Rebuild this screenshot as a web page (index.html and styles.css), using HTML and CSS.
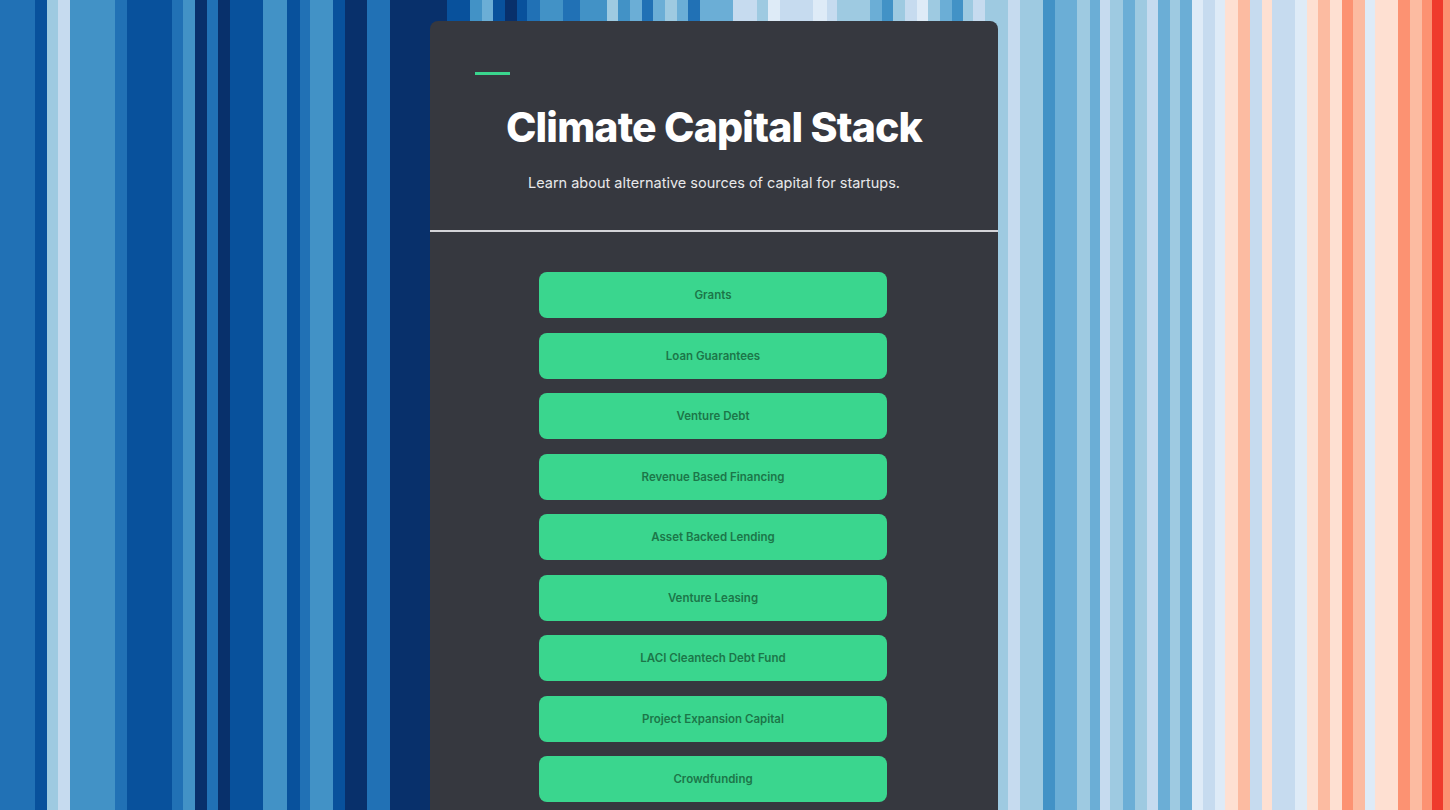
FILE: index.html
```html
<!DOCTYPE html>
<html lang="en">
<head>
    <meta charset="UTF-8">
    <meta name="viewport" content="width=device-width, initial-scale=1.0">
    <title>Climate Capital Stack</title>
    <link rel="stylesheet" href="styles.css">
</head>
<body>
    <main class="stack-card">
        <header class="stack-header">
            <span class="accent-bar"></span>
            <h1>Climate Capital Stack</h1>
            <p>Learn about alternative sources of capital for startups.</p>
        </header>
        <nav class="stack-list">
            <button class="stack-item">Grants</button>
            <button class="stack-item">Loan Guarantees</button>
            <button class="stack-item">Venture Debt</button>
            <button class="stack-item">Revenue Based Financing</button>
            <button class="stack-item">Asset Backed Lending</button>
            <button class="stack-item">Venture Leasing</button>
            <button class="stack-item">LACI Cleantech Debt Fund</button>
            <button class="stack-item">Project Expansion Capital</button>
            <button class="stack-item">Crowdfunding</button>
        </nav>
    </main>
</body>
</html>
```

FILE: styles.css
```css
html, body {
    height: 100%;
}
body {
    margin: 0;
    overflow: hidden;
    font-family: 'Inter', 'Noto Sans', sans-serif;
    /* warming stripes, one band per year (cold to hot) */
    background: linear-gradient(to right,
        #2171b5 0 35px, #08519c 35px 47px, #9ecae1 47px 58px, #c6dbef 58px 70px,
        #4292c6 70px 115px, #2171b5 115px 127px, #08519c 127px 172px, #2171b5 172px 183px,
        #4292c6 183px 195px, #08306b 195px 207px, #2171b5 207px 218px, #08306b 218px 230px,
        #08519c 230px 263px, #4292c6 263px 287px, #08519c 287px 300px, #2171b5 300px 310px,
        #4292c6 310px 333px, #08519c 333px 345px, #08306b 345px 367px, #2171b5 367px 390px,
        #08306b 390px 447px, #08519c 447px 470px, #4292c6 470px 482px, #6baed6 482px 493px,
        #08519c 493px 505px, #08306b 505px 517px, #08519c 517px 527px, #2171b5 527px 540px,
        #4292c6 540px 563px, #2171b5 563px 580px, #4292c6 580px 607px, #9ecae1 607px 618px,
        #4292c6 618px 630px, #6baed6 630px 642px, #2171b5 642px 653px, #6baed6 653px 665px,
        #9ecae1 665px 677px, #6baed6 677px 688px, #2171b5 688px 700px, #6baed6 700px 733px,
        #c6dbef 733px 757px, #9ecae1 757px 768px, #deebf7 768px 780px, #c6dbef 780px 813px,
        #deebf7 813px 827px, #c6dbef 827px 837px, #9ecae1 837px 870px, #6baed6 870px 882px,
        #4292c6 882px 893px, #9ecae1 893px 905px, #c6dbef 905px 917px, #deebf7 917px 928px,
        #9ecae1 928px 940px, #6baed6 940px 952px, #4292c6 952px 963px, #9ecae1 963px 973px,
        #c6dbef 973px 985px, #9ecae1 985px 1008px, #c6dbef 1008px 1020px, #9ecae1 1020px 1043px,
        #4292c6 1043px 1055px, #6baed6 1055px 1077px, #9ecae1 1077px 1090px, #6baed6 1090px 1100px,
        #c6dbef 1100px 1110px, #9ecae1 1110px 1123px, #6baed6 1123px 1135px, #9ecae1 1135px 1147px,
        #c6dbef 1147px 1158px, #6baed6 1158px 1170px, #9ecae1 1170px 1180px, #6baed6 1180px 1192px,
        #deebf7 1192px 1203px, #c6dbef 1203px 1215px, #deebf7 1215px 1225px, #fee0d2 1225px 1238px,
        #fcbba1 1238px 1250px, #c6dbef 1250px 1262px, #fee0d2 1262px 1272px, #c6dbef 1272px 1295px,
        #deebf7 1295px 1307px, #fee0d2 1307px 1318px, #fcbba1 1318px 1330px, #fee0d2 1330px 1342px,
        #fc9272 1342px 1353px, #fcbba1 1353px 1365px, #deebf7 1365px 1375px, #fee0d2 1375px 1398px,
        #fc9272 1398px 1410px, #fcbba1 1410px 1422px, #fc9272 1422px 1432px, #ef3b2c 1432px 1443px,
        #fc9272 1443px);
}
.stack-card {
    width: 568px;
    margin: 21px 0 0 430px;
    padding-bottom: 40px;
    background-color: #36383f;
    border-radius: 8px 8px 0 0;
}
.stack-header {
    padding: 51px 45px 37px;
    border-bottom: 2px solid #d4d4d8;
    text-align: center;
}
.accent-bar {
    display: block;
    width: 35px;
    height: 3px;
    background-color: #3ad68e;
}
.stack-header h1 {
    margin: 28px 0 0;
    font-size: 41px;
    line-height: 48px;
    font-weight: 800;
    letter-spacing: -0.02em;
    color: #ffffff;
}
.stack-header p {
    margin: 22px 0 0;
    font-size: 14.5px;
    line-height: 20px;
    color: #e8e8ea;
}
.stack-list {
    display: flex;
    flex-direction: column;
    align-items: center;
    gap: 14.5px;
    padding-top: 40px;
}
.stack-item {
    width: 348px;
    height: 46px;
    margin-right: 2px;
    border: none;
    border-radius: 8px;
    background-color: #3ad68e;
    color: #1c7649;
    font-family: 'Inter', 'Noto Sans', sans-serif;
    font-size: 11.5px;
    font-weight: 600;
    cursor: pointer;
}
```
